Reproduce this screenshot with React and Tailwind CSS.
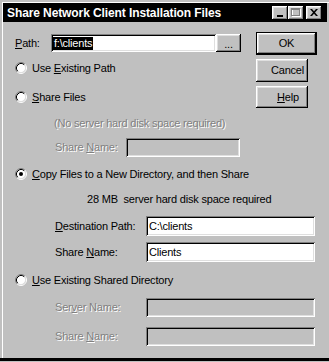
import React from "react";

const SUNKEN =
  "shadow-[inset_1px_1px_0_#808080,inset_-1px_-1px_0_#ffffff,inset_2px_2px_0_#000000,inset_-2px_-2px_0_#dfdfdf]";
const RAISED =
  "shadow-[inset_-1px_-1px_0_#000000,inset_1px_1px_0_#ffffff,inset_-2px_-2px_0_#808080,inset_2px_2px_0_#dfdfdf]";
const DIS = "text-[#808080] [text-shadow:1px_1px_0_#ffffff]";

function Radio({ checked }) {
  return (
    <svg width="12" height="12" viewBox="0 0 12 12" className="shrink-0">
      <circle cx="6" cy="6" r="4.5" fill="#fff" />
      <path d="M2.11 9.89 A5.5 5.5 0 0 1 9.89 2.11" stroke="#808080" fill="none" />
      <path d="M9.89 2.11 A5.5 5.5 0 0 1 2.11 9.89" stroke="#ffffff" fill="none" />
      <path d="M2.82 9.18 A4.5 4.5 0 0 1 9.18 2.82" stroke="#000000" fill="none" />
      <path d="M9.18 2.82 A4.5 4.5 0 0 1 2.82 9.18" stroke="#dfdfdf" fill="none" />
      {checked && <circle cx="6" cy="6" r="2" fill="#000" />}
    </svg>
  );
}

function RadioRow({ checked, children, mt }) {
  return (
    <div className={`flex items-center h-[14px] gap-[5px] ${mt}`}>
      <Radio checked={checked} />
      <span>{children}</span>
    </div>
  );
}

function TitleBtn({ children, className = "" }) {
  return (
    <div className={`w-[16px] h-[14px] bg-[#c0c0c0] flex items-center justify-center ${RAISED} ${className}`}>
      {children}
    </div>
  );
}

export default function App() {
  return (
    <div className="w-[329px] h-[362px] bg-[#c0c0c0] overflow-hidden font-['Liberation_Sans',Arial,sans-serif] text-[11px] tracking-[-0.2px] text-black leading-none shadow-[inset_0_-1px_0_#c0c0c0,inset_0_-4px_0_#000000,inset_2px_2px_0_#c0c0c0,inset_3px_3px_0_#ffffff] pl-[3px] pt-[3px] pr-[2px] flex flex-col">
      {/* Title bar */}
      <div className="h-[19px] bg-black flex items-center justify-between pl-[4px] pr-[5px] shrink-0">
        <span className="text-white font-bold text-[12px] tracking-[-0.1px]">
          Share Network Client Installation Files
        </span>
        <div className="flex items-center">
          <TitleBtn>
            <svg width="8" height="8" viewBox="0 0 8 8">
              <rect x="1" y="6" width="6" height="2" fill="#000" />
            </svg>
          </TitleBtn>
          <TitleBtn>
            <svg width="10" height="9" viewBox="0 0 10 9">
              <rect x="1.5" y="1.5" width="8" height="7" fill="none" stroke="#fff" />
              <rect x="0.5" y="0.5" width="8" height="7" fill="none" stroke="#808080" />
              <rect x="0" y="1" width="9" height="1" fill="#808080" />
            </svg>
          </TitleBtn>
          <TitleBtn className="ml-[2px]">
            <svg width="8" height="7" viewBox="0 0 8 7">
              <path d="M0 0h2l2 2.2L6 0h2L5 3.5 8 7H6L4 4.8 2 7H0l3-3.5z" fill="#000" />
            </svg>
          </TitleBtn>
        </div>
      </div>

      {/* Top section */}
      <div className="flex">
        <div className="flex flex-col pl-[12px] pt-[12px] w-[253px]">
          <div className="flex items-center h-[18px]">
            <span className="w-[36px]">
              <u>P</u>ath:
            </span>
            <div className={`w-[165px] h-[18px] bg-white flex items-center pl-[2px] ${SUNKEN}`}>
              <span className="bg-black text-white px-[1px] py-[1px]">{"f:\\clients"}</span>
            </div>
            <div className={`w-[25px] h-[18px] flex items-center justify-center ${RAISED}`}>
              <span className="mt-[2px]">...</span>
            </div>
          </div>
          <RadioRow mt="mt-[9px]">
            Use <u>E</u>xisting Path
          </RadioRow>
          <RadioRow mt="mt-[15px]">
            <u>S</u>hare Files
          </RadioRow>
        </div>
        <div className="flex flex-col pt-[10px]">
          <div className={`w-[61px] h-[23px] border border-black flex items-center justify-center ${RAISED}`}>
            OK
          </div>
          <div className={`w-[52px] h-[23px] mt-[4px] flex items-center justify-center pl-[11px] ${RAISED}`}>
            Cancel
          </div>
          <div className={`w-[52px] h-[22px] mt-[4px] flex items-center justify-center pl-[12px] ${RAISED}`}>
            <span>
              <u>H</u>elp
            </span>
          </div>
        </div>
      </div>

      {/* Lower section */}
      <div className="flex flex-col pl-[12px]">
        <div className={`h-[14px] mt-[8px] pl-[39px] flex items-center ${DIS}`}>
          (No server hard disk space required)
        </div>
        <div className="flex items-center h-[19px] mt-[8px] pl-[40px]">
          <span className={`w-[71px] ${DIS}`}>
            Share <u>N</u>ame:
          </span>
          <div className={`w-[114px] h-[19px] ${SUNKEN}`} />
        </div>
        <RadioRow checked mt="mt-[10px]">
          <u>C</u>opy Files to a New Directory, and then Share
        </RadioRow>
        <div className="h-[14px] mt-[11px] pl-[72px] flex items-center">
          28 MB&nbsp; server hard disk space required
        </div>
        <div className="flex items-center h-[20px] mt-[10px] pl-[40px]">
          <span className="w-[91px]">
            <u>D</u>estination Path:
          </span>
          <div className={`w-[169px] h-[20px] bg-white flex items-center pl-[3px] ${SUNKEN}`}>
            {"C:\\clients"}
          </div>
        </div>
        <div className="flex items-center h-[20px] mt-[6px] pl-[40px]">
          <span className="w-[91px]">
            Share <u>N</u>ame:
          </span>
          <div className={`w-[169px] h-[20px] bg-white flex items-center pl-[3px] ${SUNKEN}`}>
            Clients
          </div>
        </div>
        <RadioRow mt="mt-[11px]">
          <u>U</u>se Existing Shared Directory
        </RadioRow>
        <div className="flex items-center h-[19px] mt-[11px] pl-[40px]">
          <span className={`w-[91px] ${DIS}`}>
            Ser<u>v</u>er Name:
          </span>
          <div className={`w-[169px] h-[19px] ${SUNKEN}`} />
        </div>
        <div className="flex items-center h-[19px] mt-[10px] pl-[40px]">
          <span className={`w-[91px] ${DIS}`}>
            Share <u>N</u>ame:
          </span>
          <div className={`w-[169px] h-[19px] ${SUNKEN}`} />
        </div>
      </div>
    </div>
  );
}
